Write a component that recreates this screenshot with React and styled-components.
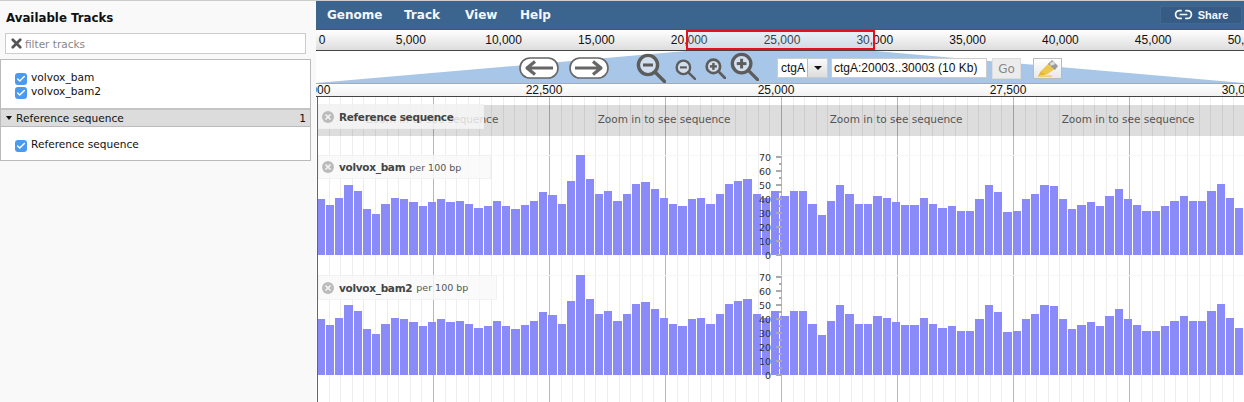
import React from 'react';
import styled, { createGlobalStyle } from 'styled-components';
import { Check, Link2, X } from 'lucide-react';

const UI_FONT = `"DejaVu Sans", sans-serif`;
const RULER_FONT = `"Liberation Sans", Arial, sans-serif`;

const GlobalStyle = createGlobalStyle`
  html, body {
    margin: 0;
    padding: 0;
    background: #fff;
  }
`;

const Page = styled.div`
  display: flex;
  width: 1244px;
  height: 402px;
  overflow: hidden;
  border-top: 1px solid #ccc;
  box-sizing: border-box;
  font-family: ${UI_FONT};
`;

const Sidebar = styled.aside`
  flex: none;
  width: 316px;
  background: #f9f9f9;
`;

const SideTitle = styled.h2`
  margin: 0;
  padding: 10px 0 0 6px;
  height: 24px;
  box-sizing: border-box;
  font-size: 11.8px;
  line-height: 15px;
  font-weight: 700;
  color: #111;
`;

const Filter = styled.div`
  display: flex;
  align-items: center;
  gap: 0;
  margin: 8px 0 0 5px;
  width: 301px;
  height: 21px;
  box-sizing: border-box;
  padding-left: 3px;
  background: #fff;
  border: 1px solid #ccc;
  color: #555;
`;

const FilterInput = styled.input`
  flex: 1;
  min-width: 0;
  border: 0;
  outline: 0;
  padding: 0 0 0 1px;
  background: transparent;
  font-family: ${UI_FONT};
  font-size: 10.5px;

  &::placeholder {
    color: #888;
    opacity: 1;
  }
`;

const TrackList = styled.div`
  margin-top: 5px;
  width: 311px;
  box-sizing: border-box;
  background: #fff;
  border: 1px solid #bbb;
`;

const TrackGroup = styled.div`
  display: flex;
  flex-direction: column;
  height: ${({ $height }) => $height}px;
  box-sizing: border-box;
  padding: ${({ $top }) => $top}px 0 0 14px;
`;

const TrackRow = styled.label`
  display: flex;
  align-items: center;
  gap: 4px;
  height: 14px;
  font-size: 10.6px;
  color: #111;
`;

const Tick = styled.span`
  display: flex;
  align-items: center;
  justify-content: center;
  flex: none;
  width: 12px;
  height: 12px;
  margin-top: 3px;
  border-radius: 3px;
  background: #4a9bef;
  color: #fff;
`;

const Category = styled.div`
  display: flex;
  align-items: center;
  height: 19px;
  box-sizing: border-box;
  padding: 0 4px 0 5px;
  background: #dcdcdc;
  border-top: 2px solid #c4c4c4;
  border-bottom: 1px solid #bbb;
  font-size: 10.6px;
  color: #111;
`;

const CategoryArrow = styled.span`
  width: 0;
  height: 0;
  margin-right: 4px;
  border-left: 3.5px solid transparent;
  border-right: 3.5px solid transparent;
  border-top: 4px solid #111;
`;

const CategoryCount = styled.span`
  margin-left: auto;
`;

const Main = styled.main`
  position: relative;
  flex: 1;
  min-width: 0;
  display: flex;
  flex-direction: column;
`;

const MenuBar = styled.nav`
  display: flex;
  align-items: center;
  flex: none;
  height: 28px;
  box-sizing: border-box;
  padding: 0 2px 1px 11px;
  background: #3b648f;
`;

const MenuItem = styled.span`
  width: ${({ $width }) => $width}px;
  font-size: 12px;
  font-weight: 700;
  color: #f4f7fa;
`;

const ShareButton = styled.span`
  display: flex;
  align-items: center;
  justify-content: center;
  gap: 5px;
  margin-left: auto;
  width: 82px;
  height: 18px;
  box-sizing: border-box;
  background: #365c85;
  border: 1px solid #41698f;
  font-family: ${RULER_FONT};
  font-size: 11px;
  font-weight: 700;
  color: #f4f7fa;
`;

const Ruler = styled.div`
  position: relative;
  display: flex;
  flex: none;
  overflow: hidden;
  height: ${({ $height }) => $height}px;
  box-sizing: border-box;
  background: ${({ $fade }) => $fade};
  border-top: 1px solid ${({ $top }) => $top};
  border-bottom: 1px solid #444;
  font-family: ${RULER_FONT};
  font-size: 12px;
  line-height: ${({ $line }) => $line}px;
  color: #111;
`;

const RulerCell = styled.span`
  flex: none;
  box-sizing: border-box;
  width: ${({ $width }) => $width}px;
  margin-left: ${({ $offset }) => $offset || 0}px;
  padding-left: ${({ $pad }) => $pad || 0}px;
  white-space: nowrap;
  text-align: center;
`;

const ViewBox = styled.div`
  position: absolute;
  top: 0;
  bottom: 0;
  left: 370px;
  width: 189px;
  box-sizing: border-box;
  border: 2px solid #e8101f;
  background: rgba(170, 205, 240, 0.25);
`;

const Toolbar = styled.div`
  position: relative;
  display: flex;
  align-items: flex-start;
  flex: none;
  height: 32px;
  padding-left: 203px;
  background: #fff;
`;

const Trapezoid = styled.svg`
  position: absolute;
  top: 0;
  left: 0;
  width: 928px;
  height: 32px;
`;

const ToolIcon = styled.svg`
  position: relative;
  flex: none;
  margin-left: ${({ $gap }) => $gap || 0}px;
  margin-top: ${({ $top }) => $top}px;
`;

const SelectBox = styled.div`
  position: relative;
  display: flex;
  flex: none;
  margin: 7px 0 0 ${({ $gap }) => $gap}px;
  width: 51px;
  height: 20px;
  box-sizing: border-box;
  background: #fff;
  border: 1px solid #ccc;
  font-family: ${RULER_FONT};
  font-size: 12px;
  line-height: 18px;
  color: #111;
`;

const SelectValue = styled.span`
  width: 29px;
  padding-left: 3px;
  box-sizing: border-box;
`;

const SelectArrow = styled.span`
  display: flex;
  align-items: center;
  justify-content: center;
  flex: 1;
  background: linear-gradient(#fafafa, #ddd);
  border-left: 1px solid #bbb;

  &::after {
    content: '';
    border-left: 4px solid transparent;
    border-right: 4px solid transparent;
    border-top: 4px solid #111;
  }
`;

const LocationInput = styled.input`
  position: relative;
  flex: none;
  margin: 7px 0 0 3px;
  width: 156px;
  height: 20px;
  box-sizing: border-box;
  padding: 0 0 0 2px;
  background: #fff;
  border: 1px solid #ccc;
  outline: 0;
  font-family: ${RULER_FONT};
  font-size: 12px;
  color: #111;
`;

const GoButton = styled.span`
  position: relative;
  display: flex;
  align-items: center;
  justify-content: center;
  flex: none;
  margin: 7px 0 0 5px;
  width: 29px;
  height: 21px;
  box-sizing: border-box;
  background: #ececec;
  border: 1px solid #ddd;
  font-size: 12px;
  color: #888;
`;

const HighlightButton = styled.span`
  position: relative;
  display: flex;
  align-items: center;
  justify-content: center;
  flex: none;
  margin: 7px 0 0 12px;
  width: 29px;
  height: 21px;
  box-sizing: border-box;
  background: linear-gradient(#fff, #e8e8e8);
  border: 1px solid #bbb;
`;

const TrackArea = styled.div`
  position: relative;
  flex: 1;
  min-height: 0;
  overflow: hidden;
  box-sizing: border-box;
  margin-left: 1px;
  padding-top: 8px;
  border-left: 1px solid #666;
`;

const GridSvg = styled.svg`
  position: absolute;
  top: 0;
  left: 0;
  width: 927px;
  height: 305px;
`;

const SequenceBand = styled.div`
  display: flex;
  height: 31px;
  margin-left: -2px;
  background: #ddd;
`;

const SequenceCell = styled.span`
  flex: none;
  width: 232px;
  font-size: 10.5px;
  line-height: 29px;
  text-align: center;
  color: #555;
`;

const TrackLabel = styled.div`
  position: absolute;
  z-index: 2;
  top: ${({ $top }) => $top}px;
  left: 0;
  display: flex;
  align-items: center;
  gap: 4px;
  width: ${({ $width }) => $width}px;
  height: ${({ $height }) => $height}px;
  box-sizing: border-box;
  padding-left: 3px;
  background: rgba(249, 249, 249, 0.8);
  border: 1px solid rgba(238, 238, 238, 0.7);
  font-size: 10.5px;
  font-weight: 700;
  letter-spacing: -0.3px;
  white-space: nowrap;
  color: #444;
`;

const TrackNote = styled.span`
  font-size: 9.5px;
  font-weight: 400;
  letter-spacing: 0;
  color: #555;
`;

const CloseDot = styled.svg`
  flex: none;
  margin-right: 1px;
`;

const CoverageSvg = styled.svg`
  position: relative;
  display: block;
  width: 927px;
  height: 120px;
  overflow: visible;
`;

const AxisText = styled.text`
  font-family: ${UI_FONT};
  font-size: 9.5px;
  fill: #333;
`;

// bar heights read off the picture, in px above the baseline
const BAR_HEIGHTS = [
  56, 50, 57, 70, 64, 46, 41, 51, 57, 56, 53, 49, 53, 56, 53, 54, 51, 47, 49, 54,
  49, 46, 50, 54, 63, 60, 51, 74, 100, 76, 61, 64, 54, 61, 71, 73, 66, 57, 51, 49,
  56, 57, 51, 61, 71, 74, 76, 61, 57, 64, 59, 64, 64, 51, 40, 54, 70, 61, 51, 51,
  59, 57, 53, 50, 50, 57, 51, 47, 49, 44, 44, 56, 70, 63, 43, 44, 56, 61, 70, 69,
  56, 46, 50, 53, 49, 59, 66, 56, 50, 44, 44, 49, 54, 59, 54, 54, 64, 71, 57, 47,
];

const BAR_STEP = 9.28;
const MINOR_STEP = 11.6;
const VIEW_WIDTH = 927;
const overviewTicks = ['0', '5,000', '10,000', '15,000', '20,000', '25,000', '30,000', '35,000', '40,000', '45,000', '50,000'];
const detailTicks = ['20,000', '22,500', '25,000', '27,500', '30,000'];

const Magnifier = ({ size, sign, gap, top, sw = 3.4 }) => (
  <ToolIcon $gap={gap} $top={top} width={size} height={size} viewBox="0 0 30 30">
    <circle cx="12" cy="12" r="9.6" fill="#dfe7f0" fillOpacity="0.75" stroke="#5c5c5c" strokeWidth={sw} />
    <line x1="19" y1="19" x2="28.5" y2="28.5" stroke="#5c5c5c" strokeWidth={sw} strokeLinecap="round" />
    <line x1="7" y1="12" x2="17" y2="12" stroke="#5c5c5c" strokeWidth={sw * 0.9} />
    {sign === '+' && <line x1="12" y1="7" x2="12" y2="17" stroke="#5c5c5c" strokeWidth={sw * 0.9} />}
  </ToolIcon>
);

const ArrowPill = ({ dir, gap }) => (
  <ToolIcon $gap={gap} $top={6} width="40" height="22" viewBox="0 0 40 22">
    <rect x="1" y="1" width="38" height="20" rx="10" fill="#fff" stroke="#666" strokeWidth="1.6" />
    <g transform={dir === 'left' ? undefined : 'translate(40 0) scale(-1 1)'}>
      <path d="M34 11H9M16 4.5 8 11l8 6.5" fill="none" stroke="#666" strokeWidth="3.2" strokeLinejoin="round" />
    </g>
  </ToolIcon>
);

const CloseIcon = () => (
  <CloseDot width="12" height="12" viewBox="0 0 12 12">
    <circle cx="6" cy="6" r="6" fill="#bbb" />
    <path d="M3.5 3.5l5 5M8.5 3.5l-5 5" stroke="#f4f4f4" strokeWidth="1.6" />
  </CloseDot>
);

const TrackCheck = () => (
  <Tick>
    <Check size={10} strokeWidth={3.5} />
  </Tick>
);

const GridLines = () => {
  const lines = [];
  for (let i = 0; i < 80; i++) {
    const x = Math.round(115 + (i - 10) * MINOR_STEP);
    if (x < 0 || x > VIEW_WIDTH) continue;
    const major = (i % 10) === 0;
    lines.push(
      <line
        key={i}
        x1={x + 0.5}
        x2={x + 0.5}
        y1="0"
        y2="305"
        stroke={major ? 'rgba(0,0,0,0.28)' : 'rgba(0,0,0,0.07)'}
      />
    );
  }
  return <GridSvg viewBox="0 0 927 305">{lines}</GridSvg>;
};

const Coverage = () => {
  const edge = (i) => Math.floor(-1 + i * BAR_STEP);
  const ticks = [];
  for (let v = 0; v <= 70; v += 5) ticks.push(v);

  return (
    <CoverageSvg viewBox="0 0 927 120" shapeRendering="crispEdges">
      <line x1="0" x2="927" y1="19.5" y2="19.5" stroke="#f7f7f7" />
      {BAR_HEIGHTS.map((h, i) => (
        <rect
          key={i}
          x={Math.max(edge(i), 0)}
          y={119 - h}
          width={edge(i + 1) - Math.max(edge(i), 0) - 1}
          height={h}
          fill="#8a8af8"
        />
      ))}
      {ticks.map((v) => (
        <rect
          key={v}
          x={v % 10 === 0 ? 458 : 461}
          y={118 - v * 1.4}
          width={v % 10 === 0 ? 6 : 3}
          height="2"
          fill="#aaa"
        />
      ))}
      {ticks.filter((v) => v % 10 === 0).map((v) => (
        <AxisText key={v} x="453" y={122.5 - v * 1.4} textAnchor="end" shapeRendering="auto">
          {v}
        </AxisText>
      ))}
    </CoverageSvg>
  );
};

const App = () => (
  <>
    <GlobalStyle />
    <Page>
      <Sidebar>
        <SideTitle>Available Tracks</SideTitle>
        <Filter>
          <X size={15} strokeWidth={4.5} />
          <FilterInput placeholder="filter tracks" />
        </Filter>
        <TrackList>
          <TrackGroup $height={48} $top={10}>
            <TrackRow><TrackCheck />volvox_bam</TrackRow>
            <TrackRow><TrackCheck />volvox_bam2</TrackRow>
          </TrackGroup>
          <Category>
            <CategoryArrow />
            Reference sequence
            <CategoryCount>1</CategoryCount>
          </Category>
          <TrackGroup $height={33} $top={10}>
            <TrackRow><TrackCheck />Reference sequence</TrackRow>
          </TrackGroup>
        </TrackList>
      </Sidebar>

      <Main>
        <MenuBar>
          <MenuItem $width={77}>Genome</MenuItem>
          <MenuItem $width={61}>Track</MenuItem>
          <MenuItem $width={55}>View</MenuItem>
          <MenuItem $width={40}>Help</MenuItem>
          <ShareButton>
            <Link2 size={19} strokeWidth={2.2} />
            Share
          </ShareButton>
        </MenuBar>

        <Ruler $height={22} $line={20} $top="#555" $fade="linear-gradient(#fff, #ddd)">
          {overviewTicks.map((t, i) => (
            <RulerCell
              key={t}
              $width={92.8}
              $offset={i === 0 ? -44.4 : 0}
              $pad={i === 0 ? 8 : 0}
            >
              {t}
            </RulerCell>
          ))}
          <ViewBox />
        </Ruler>

        <Toolbar>
          <Trapezoid viewBox="0 0 928 32">
            <polygon points="0,32 370,0 559,0 928,32" fill="#a8c6e8" />
          </Trapezoid>
          <ArrowPill dir="left" />
          <ArrowPill dir="right" gap={10} />
          <Magnifier size={30} sign="-" gap={27} top={2} />
          <Magnifier size={21} sign="-" gap={9} top={8} />
          <Magnifier size={21} sign="+" gap={9} top={7} sw={3.8} />
          <Magnifier size={29} sign="+" gap={4} top={1} />
          <SelectBox $gap={18}>
            <SelectValue>ctgA</SelectValue>
            <SelectArrow />
          </SelectBox>
          <LocationInput readOnly value="ctgA:20003..30003 (10 Kb)" />
          <GoButton>Go</GoButton>
          <HighlightButton>
            <svg width="22" height="18" viewBox="0 0 22 18">
              <path d="M1 16l3-5 5-1-1 5z" fill="#e0b93a" />
              <path d="M4 11l8-8 6 6-9 6z" fill="#eec84a" />
              <path d="M11 4l4-4 6 6-3 4z" fill="#9a9a9a" />
              <path d="M13 3l3-1.5 2.5 2.5-5 2z" fill="#dcdcdc" />
              <rect x="1" y="15.5" width="14" height="1.5" fill="#e8cf70" />
            </svg>
          </HighlightButton>
        </Toolbar>

        <Ruler $height={14} $line={12} $top="#aaa" $fade="linear-gradient(#fff, #f2f2f2)">
          {detailTicks.map((t, i) => (
            <RulerCell key={t} $width={232} $offset={i === 0 ? -120 : 0}>
              {t}
            </RulerCell>
          ))}
        </Ruler>

        <TrackArea>
          <SequenceBand>
            {[0, 1, 2, 3].map((i) => (
              <SequenceCell key={i}>Zoom in to see sequence</SequenceCell>
            ))}
          </SequenceBand>
          <GridLines />
          <TrackLabel $top={7} $width={166} $height={25}>
            <CloseIcon />
            Reference sequence
          </TrackLabel>
          <Coverage />
          <TrackLabel $top={58} $width={173} $height={24}>
            <CloseIcon />
            volvox_bam <TrackNote>per 100 bp</TrackNote>
          </TrackLabel>
          <Coverage />
          <TrackLabel $top={178} $width={179} $height={25}>
            <CloseIcon />
            volvox_bam2 <TrackNote>per 100 bp</TrackNote>
          </TrackLabel>
        </TrackArea>
      </Main>
    </Page>
  </>
);

export default App;
